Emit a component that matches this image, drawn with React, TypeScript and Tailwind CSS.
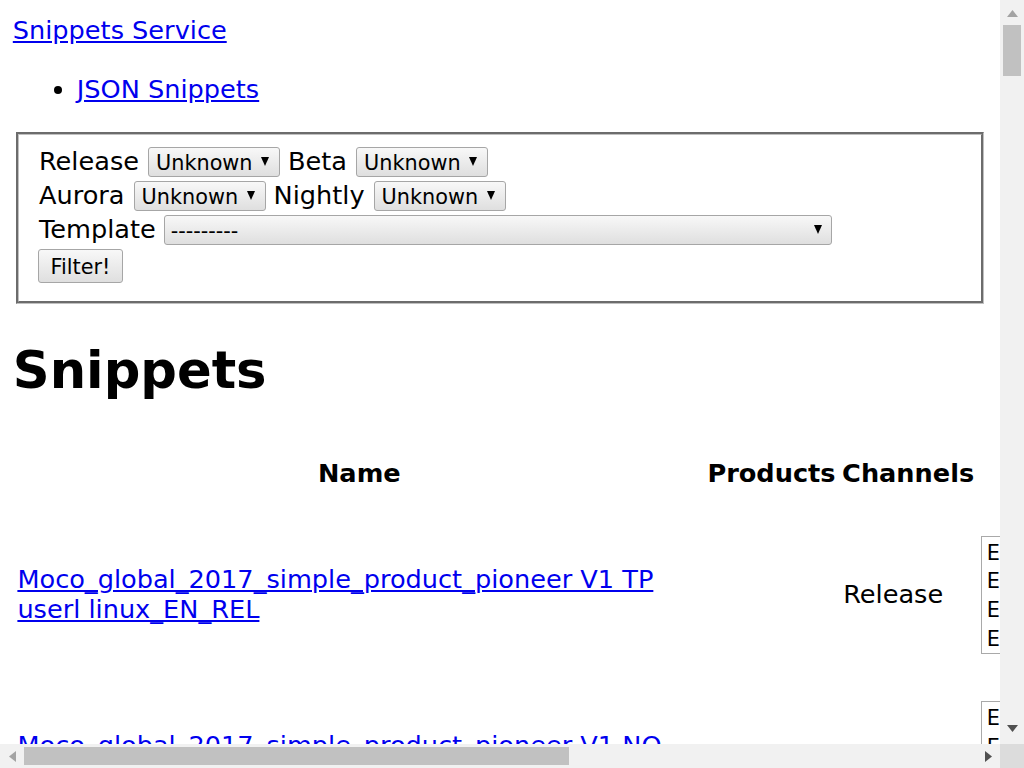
function Caret({ className }: { className?: string }) {
  return (
    <svg width="8" height="9" viewBox="0 0 8 9" className={className}>
      <path d="M0 0h8L4 9z" fill="#000" />
    </svg>
  );
}

function FakeSelect({ label, width }: { label: string; width: string }) {
  return (
    <span
      className={`${width} inline-flex h-[30px] shrink-0 items-center justify-between rounded-[3px] border border-[#a6a6a6] bg-linear-to-b from-[#f8f8f8] to-[#dfdfdf] pl-[7px] pr-[10px] text-[20.8px] leading-none`}
    >
      <span className="pt-[3px]">{label}</span>
      <Caret />
    </span>
  );
}

function ScrollArrow({ dir, dark }: { dir: "up" | "down" | "left" | "right"; dark?: boolean }) {
  const fill = dark ? "#505050" : "#a3a3a3";
  if (dir === "up" || dir === "down") {
    return (
      <svg width="11" height="7" viewBox="0 0 11 7">
        <path d={dir === "up" ? "M5.5 0L11 7H0z" : "M0 0h11L5.5 7z"} fill={fill} />
      </svg>
    );
  }
  return (
    <svg width="7" height="11" viewBox="0 0 7 11">
      <path d={dir === "left" ? "M7 0v11L0 5.5z" : "M0 0v11l7-5.5z"} fill={fill} />
    </svg>
  );
}

const rows = [
  { name: "Moco_global_2017_simple_product_pioneer V1 TP userl linux_EN_REL", channel: "Release" },
  { name: "Moco_global_2017_simple_product_pioneer V1 NO userl linux_EN_REL", channel: "Release" },
];

const locales = ["English (US)", "English (GB)", "English (Canada)", "English (South Africa)"];

export default function App() {
  return (
    <div className="flex h-[768px] w-[1024px] flex-col overflow-hidden bg-white font-['DejaVu_Sans',sans-serif] text-[25.6px] leading-[29.8px] text-black">
      <div className="flex h-[744px]">
        <div className="w-[1000px] overflow-hidden">
          <div className="px-[12.8px] pt-[16px]">
            <div>
              <a href="#" className="text-[#0000ee] underline">Snippets Service</a>
            </div>
            <ul className="mt-[29px] list-disc pl-[64px]">
              <li>
                <a href="#" className="text-[#0000ee] underline">JSON Snippets</a>
              </li>
            </ul>

            <form className="mt-[27px]">
              <fieldset className="mx-[3.2px] border-[3px] border-[#c0c0c0] px-[20px] pb-[18px] pt-[10px] [border-style:groove]">
                <div className="flex h-[34px] items-center">
                  <span className="mr-[9px]">Release</span>
                  <FakeSelect label="Unknown" width="w-[132px]" />
                  <span className="ml-[8px] mr-[9px]">Beta</span>
                  <FakeSelect label="Unknown" width="w-[132px]" />
                </div>
                <div className="flex h-[34px] items-center">
                  <span className="mr-[9px]">Aurora</span>
                  <FakeSelect label="Unknown" width="w-[132px]" />
                  <span className="ml-[8px] mr-[9px]">Nightly</span>
                  <FakeSelect label="Unknown" width="w-[132px]" />
                </div>
                <div className="flex h-[34px] items-center">
                  <span className="mr-[8px]">Template</span>
                  <span className="inline-flex h-[30px] w-[668px] items-center justify-between rounded-[3px] border border-[#a6a6a6] bg-linear-to-b from-[#f8f8f8] to-[#dfdfdf] pl-[6px] pr-[9px] text-[20.8px] leading-none">
                    <span className="pt-[3px]">---------</span>
                    <Caret />
                  </span>
                </div>
                <div className="mt-[2px] flex">
                  <button
                    type="button"
                    className="-ml-[1px] h-[34px] w-[85px] rounded-[3px] border border-[#a6a6a6] bg-linear-to-b from-[#f8f8f8] to-[#dfdfdf] pt-[3px] text-[20.8px] leading-none"
                  >
                    Filter!
                  </button>
                </div>
              </fieldset>
            </form>

            <h1 className="mt-[37px] text-[51.2px] font-bold leading-[59.6px]">Snippets</h1>

            <table className="mt-[35px] w-max border-separate border-spacing-[3.2px]">
              <thead>
                <tr>
                  <th className="h-[72px] w-[687px] p-[1.6px] text-center align-middle font-bold">Name</th>
                  <th className="w-[131px] p-[1.6px] text-center align-middle font-bold">Products</th>
                  <th className="w-[136px] p-[1.6px] text-center align-middle font-bold">Channels</th>
                  <th className="w-[330px] p-[1.6px] text-center align-middle font-bold">Locales</th>
                  <th className="w-[240px] p-[1.6px] text-center align-middle font-bold">Modified</th>
                </tr>
              </thead>
              <tbody>
                {rows.map((row, index) => (
                  <tr key={index}>
                    <td className="h-[162.8px] p-[1.6px] align-middle">
                      <a href="#" className="text-[#0000ee] underline">{row.name}</a>
                    </td>
                    <td className="p-[1.6px] align-middle" />
                    <td className="p-[1.6px] pl-[3px] align-middle">{row.channel}</td>
                    <td className="p-[1.6px] align-middle">
                      <div className="h-[118px] w-[300px] border border-[#a9a9a9] pl-[5px] pt-[2px] text-[20.8px] leading-[28.7px]">
                        {locales.map((locale) => (
                          <div key={locale}>{locale}</div>
                        ))}
                      </div>
                    </td>
                    <td className="p-[1.6px] align-middle">2017-11-20</td>
                  </tr>
                ))}
              </tbody>
            </table>
          </div>
        </div>

        <div className="flex w-[24px] flex-col bg-[#f1f1f1]">
          <div className="flex h-[24px] justify-center pt-[10px]">
            <ScrollArrow dir="up" />
          </div>
          <div className="flex-1">
            <div className="mx-[3px] mt-[1px] h-[51px] bg-[#c1c1c1]" />
          </div>
          <div className="flex h-[24px] justify-center pt-[5px]">
            <ScrollArrow dir="down" dark />
          </div>
        </div>
      </div>

      <div className="flex h-[24px]">
        <div className="flex w-[1000px] items-center bg-[#f1f1f1]">
          <div className="flex w-[24px] justify-center">
            <ScrollArrow dir="left" />
          </div>
          <div className="h-[18px] w-[545px] bg-[#c1c1c1]" />
          <div className="flex-1" />
          <div className="flex w-[24px] justify-center">
            <ScrollArrow dir="right" dark />
          </div>
        </div>
        <div className="w-[24px] bg-[#dcdcdc]" />
      </div>
    </div>
  );
}
